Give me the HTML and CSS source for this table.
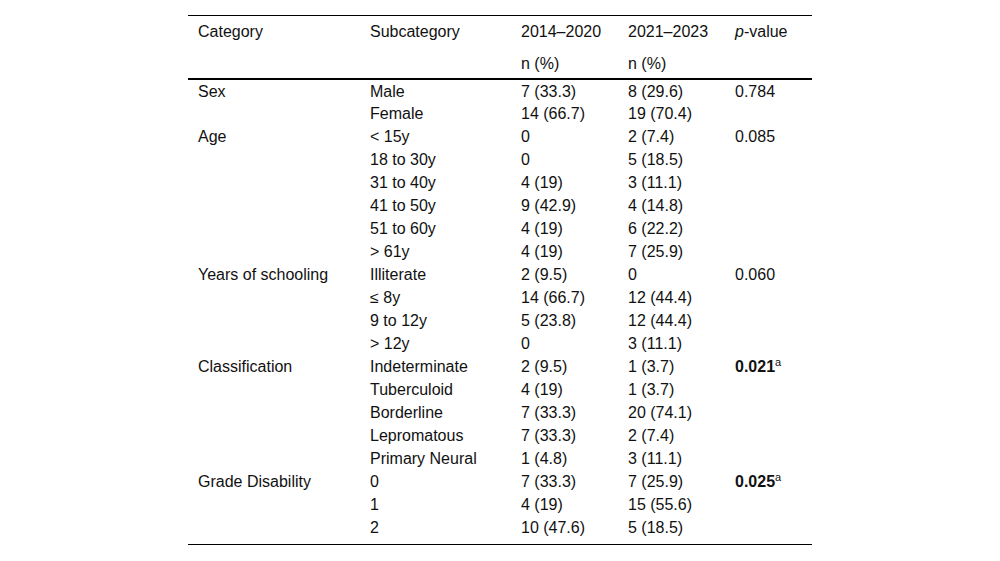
FILE: index.html
```html
<!DOCTYPE html>
<html>
<head>
<meta charset="utf-8">
<link rel="stylesheet" href="styles.css">
</head>
<body>
<div class="wrap">
<table class="data">
<colgroup>
<col class="c1"><col class="c2"><col class="c3"><col class="c4"><col class="c5">
</colgroup>
<thead>
<tr class="h1"><th>Category</th><th>Subcategory</th><th>2014–2020</th><th>2021–2023</th><th><i>p</i>-value</th></tr>
<tr class="h2"><th></th><th></th><th>n (%)</th><th>n (%)</th><th></th></tr>
</thead>
<tbody>
<tr><td>Sex</td><td>Male</td><td>7 (33.3)</td><td>8 (29.6)</td><td>0.784</td></tr>
<tr><td></td><td>Female</td><td>14 (66.7)</td><td>19 (70.4)</td><td></td></tr>
<tr><td>Age</td><td>&lt; 15y</td><td>0</td><td>2 (7.4)</td><td>0.085</td></tr>
<tr><td></td><td>18 to 30y</td><td>0</td><td>5 (18.5)</td><td></td></tr>
<tr><td></td><td>31 to 40y</td><td>4 (19)</td><td>3 (11.1)</td><td></td></tr>
<tr><td></td><td>41 to 50y</td><td>9 (42.9)</td><td>4 (14.8)</td><td></td></tr>
<tr><td></td><td>51 to 60y</td><td>4 (19)</td><td>6 (22.2)</td><td></td></tr>
<tr><td></td><td>&gt; 61y</td><td>4 (19)</td><td>7 (25.9)</td><td></td></tr>
<tr><td>Years of schooling</td><td>Illiterate</td><td>2 (9.5)</td><td>0</td><td>0.060</td></tr>
<tr><td></td><td>≤ 8y</td><td>14 (66.7)</td><td>12 (44.4)</td><td></td></tr>
<tr><td></td><td>9 to 12y</td><td>5 (23.8)</td><td>12 (44.4)</td><td></td></tr>
<tr><td></td><td>&gt; 12y</td><td>0</td><td>3 (11.1)</td><td></td></tr>
<tr><td>Classification</td><td>Indeterminate</td><td>2 (9.5)</td><td>1 (3.7)</td><td><b>0.021</b><sup>a</sup></td></tr>
<tr><td></td><td>Tuberculoid</td><td>4 (19)</td><td>1 (3.7)</td><td></td></tr>
<tr><td></td><td>Borderline</td><td>7 (33.3)</td><td>20 (74.1)</td><td></td></tr>
<tr><td></td><td>Lepromatous</td><td>7 (33.3)</td><td>2 (7.4)</td><td></td></tr>
<tr><td></td><td>Primary Neural</td><td>1 (4.8)</td><td>3 (11.1)</td><td></td></tr>
<tr><td>Grade Disability</td><td>0</td><td>7 (33.3)</td><td>7 (25.9)</td><td><b>0.025</b><sup>a</sup></td></tr>
<tr><td></td><td>1</td><td>4 (19)</td><td>15 (55.6)</td><td></td></tr>
<tr><td></td><td>2</td><td>10 (47.6)</td><td>5 (18.5)</td><td></td></tr>
</tbody>
</table>
</div>
</body>
</html>
```
FILE: styles.css
```css
html, body {
  margin: 0;
  padding: 0;
  background: #fff;
}
body {
  font-family: "Liberation Sans", Arial, sans-serif;
  font-size: 16px;
  line-height: 18px;
  color: #111;
}
.wrap {
  width: 624px;
  margin: 15px auto 0;
  border-top: 1px solid #000;
  border-bottom: 1px solid #000;
  padding-bottom: 5px;
}
.data {
  width: 624px;
  border-collapse: collapse;
  table-layout: fixed;
}
.c1 { width: 172px; }
.c2 { width: 151px; }
.c3 { width: 107px; }
.c4 { width: 107px; }
.c5 { width: 87px; }
.data th, .data td {
  text-align: left;
  font-weight: normal;
  padding: 0 0 0 10px;
  vertical-align: middle;
  white-space: nowrap;
}
.data thead tr.h1 { height: 32px; }
.data thead tr.h2 { height: 31px; }
.data thead tr.h2 th { border-bottom: 2px solid #000; padding-top: 1px; }
.data tbody tr { height: 23px; }
.data tbody tr:first-child td { padding-top: 1px; }
.data b { font-weight: bold; }
.data sup {
  font-size: 11px;
  vertical-align: 6px;
  line-height: 0;
}
```
